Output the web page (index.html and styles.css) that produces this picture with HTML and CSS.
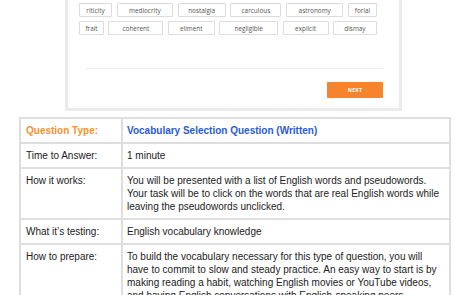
FILE: index.html
```html
<!DOCTYPE html>
<html>
<head>
<meta charset="utf-8">
<link rel="stylesheet" href="styles.css">
</head>
<body>
<div class="frame">
  <div class="chips">
    <div class="row">
      <span class="chip w33">riticity</span>
      <span class="chip w56">mediocrity</span>
      <span class="chip w48">nostalgia</span>
      <span class="chip w51">carculous</span>
      <span class="chip w57">astronomy</span>
      <span class="chip w29">forial</span>
    </div>
    <div class="row">
      <span class="chip w25">frait</span>
      <span class="chip w55">coherent</span>
      <span class="chip w47">eliment</span>
      <span class="chip w59">negligible</span>
      <span class="chip w46">explicit</span>
      <span class="chip w44">dismay</span>
    </div>
  </div>
  <div class="divider"></div>
  <div class="actions"><button class="next">NEXT</button></div>
</div>
<table class="info">
  <tr>
    <td class="label type">Question Type:</td>
    <td class="value qtype">Vocabulary Selection Question (Written)</td>
  </tr>
  <tr>
    <td class="label">Time to Answer:</td>
    <td class="value">1 minute</td>
  </tr>
  <tr>
    <td class="label">How it works:</td>
    <td class="value">You will be presented with a list of English words and pseudowords. Your task will be to click on the words that are real English words while leaving the pseudowords unclicked.</td>
  </tr>
  <tr>
    <td class="label">What it’s testing:</td>
    <td class="value">English vocabulary knowledge</td>
  </tr>
  <tr>
    <td class="label">How to prepare:</td>
    <td class="value">To build the vocabulary necessary for this type of question, you will have to commit to slow and steady practice. An easy way to start is by making reading a habit, watching English movies or YouTube videos, and having English conversations with English-speaking peers.</td>
  </tr>
</table>
</body>
</html>
```
FILE: styles.css
```css
html, body {
  margin: 0;
  padding: 0;
  background: #ffffff;
  overflow: hidden;
}
body {
  font-family: "Liberation Sans", Arial, sans-serif;
  color: #222;
}
.frame {
  margin-left: 65px;
  border: 3px solid #ebebeb;
  border-top: none;
  padding: 3px 16px 10px 11px;
  box-sizing: content-box;
  width: 304px;
}
.chips {
  width: 298px;
  display: flex;
  flex-direction: column;
  gap: 4px;
}
.row {
  display: flex;
  justify-content: space-between;
}
.chip {
  box-sizing: border-box;
  height: 14px;
  border: 1px solid #dcdcdc;
  border-radius: 1px;
  display: flex;
  align-items: center;
  justify-content: center;
  font-family: "Open Sans", sans-serif;
  font-size: 6.4px;
  color: #555;
}
.w25 { width: 25px; }
.w29 { width: 29px; }
.w33 { width: 33px; }
.w44 { width: 44px; }
.w46 { width: 46px; }
.w47 { width: 47px; }
.w48 { width: 48px; }
.w51 { width: 51px; }
.w55 { width: 55px; }
.w56 { width: 56px; }
.w57 { width: 57px; }
.w59 { width: 59px; }
.divider {
  margin: 33px 0 0 6px;
  height: 1px;
  background: #eeeeee;
}
.actions {
  display: flex;
  justify-content: flex-end;
  margin-top: 13px;
}
.next {
  width: 56px;
  height: 16px;
  border: none;
  border-radius: 1px;
  background: #f6842c;
  color: #fff;
  font-family: "Open Sans", sans-serif;
  font-size: 5px;
  font-weight: 700;
  letter-spacing: 0.3px;
  padding: 0;
  box-shadow: 0 0 1px rgba(0,0,0,0.15);
}
.info {
  margin: 6px 0 0 19px;
  width: 432px;
  border: 1px solid #dedede;
  border-spacing: 0;
  font-size: 10px;
  line-height: 13px;
}
.info td {
  border: 1px solid #dedede;
  vertical-align: top;
  padding: 5px 3px 5px 4px;
}
.info td.label {
  width: 92px;
  padding-left: 5px;
}
.type {
  color: #f7922f;
  font-weight: 700;
}
.qtype {
  color: #2b5bd0;
  font-weight: 700;
}
```
